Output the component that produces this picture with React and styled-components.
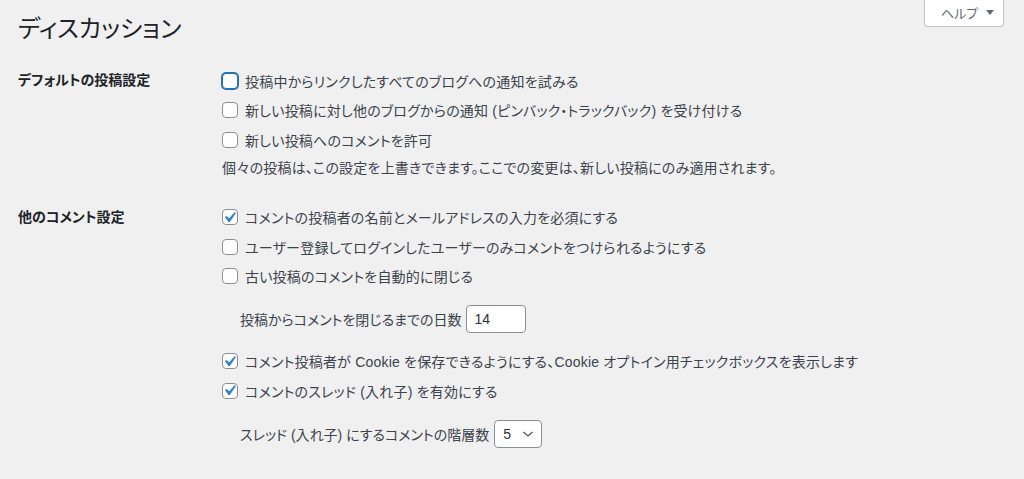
import React from 'react';
import styled, { createGlobalStyle } from 'styled-components';

const GlobalStyle = createGlobalStyle`
  body {
    margin: 0;
    background: #f0f0f1;
    color: #3c434a;
    font-family: "Liberation Sans", "Noto Sans CJK JP", sans-serif;
    font-size: 14px;
    font-feature-settings: "palt";
    letter-spacing: 0.2px;
  }
`;

const Page = styled.div`
  padding: 0 20px 0 18px;
`;

const Header = styled.div`
  display: flex;
  justify-content: space-between;
  align-items: flex-start;
  height: 66px;
`;

const Title = styled.h1`
  margin: 0;
  padding-top: 14px;
  font-size: 24px;
  font-weight: 400;
  line-height: 30px;
  letter-spacing: 0;
  color: #1d2327;
`;

const HelpButton = styled.button`
  display: flex;
  align-items: center;
  gap: 8px;
  width: 80px;
  height: 28px;
  margin-top: -1px;
  padding: 0 0 0 16px;
  background: #fff;
  border: 1px solid #c3c4c7;
  border-top: none;
  border-radius: 0 0 4px 4px;
  color: #646970;
  font-family: inherit;
  font-size: 13px;
  font-feature-settings: "palt";
`;

const Section = styled.div`
  display: grid;
  grid-template-columns: 204px 1fr;
  margin-top: ${p => p.$gap || 0}px;
`;

const Label = styled.div`
  font-weight: 700;
  line-height: 29.5px;
  letter-spacing: 0;
  color: #1d2327;
`;

const Fields = styled.div`
  display: flex;
  flex-direction: column;
`;

const CheckRow = styled.label`
  display: flex;
  align-items: center;
  gap: 7px;
  height: 29.5px;
`;

const Box = styled.span`
  display: flex;
  align-items: center;
  justify-content: center;
  flex: none;
  width: 16px;
  height: 16px;
  box-sizing: border-box;
  background: #fff;
  border: 1px solid ${p => (p.$focus ? '#2271b1' : '#8c8f94')};
  border-radius: 4px;
  box-shadow: ${p => (p.$focus ? '0 0 0 1px #2271b1' : 'none')};

  svg {
    flex: none;
    margin-left: -1px;
  }
`;

const Description = styled.p`
  margin: 0;
  line-height: 26px;
`;

const SubRow = styled.div`
  display: flex;
  align-items: center;
  gap: 5px;
  height: 28px;
  margin: 14px 0 13.5px 18px;
  letter-spacing: 0;
`;

const NumberInput = styled.div`
  display: flex;
  align-items: center;
  width: ${p => p.$width || 60}px;
  height: 28px;
  box-sizing: border-box;
  padding: 0 7px;
  background: #fff;
  border: 1px solid #8c8f94;
  border-radius: 4px;
  color: #2c3338;
`;

const SelectBox = styled(NumberInput)`
  justify-content: space-between;
  padding: 0 7px 0 8px;
`;

const Check = () => (
  <svg width="21" height="21" viewBox="0 0 20 20">
    <path d="M14.83 4.89l1.34.94-5.81 8.38H9.02L5.78 9.67l1.34-1.25 2.57 2.4z" fill="#3582c4" />
  </svg>
);

const Checkbox = ({ checked, focus, children }) => (
  <CheckRow>
    <Box $focus={focus}>{checked && <Check />}</Box>
    {children}
  </CheckRow>
);

const App = () => (
  <>
    <GlobalStyle />
    <Page>
      <Header>
        <Title>ディスカッション</Title>
        <HelpButton>
          ヘルプ
          <svg width="8" height="5" viewBox="0 0 8 5">
            <path d="M0 0h8L4 5z" fill="#646970" />
          </svg>
        </HelpButton>
      </Header>

      <Section>
        <Label>デフォルトの投稿設定</Label>
        <Fields>
          <Checkbox focus>投稿中からリンクしたすべてのブログへの通知を試みる</Checkbox>
          <Checkbox>新しい投稿に対し他のブログからの通知 (ピンバック・トラックバック) を受け付ける</Checkbox>
          <Checkbox>新しい投稿へのコメントを許可</Checkbox>
          <Description>個々の投稿は、この設定を上書きできます。ここでの変更は、新しい投稿にのみ適用されます。</Description>
        </Fields>
      </Section>

      <Section $gap={22}>
        <Label>他のコメント設定</Label>
        <Fields>
          <Checkbox checked>コメントの投稿者の名前とメールアドレスの入力を必須にする</Checkbox>
          <Checkbox>ユーザー登録してログインしたユーザーのみコメントをつけられるようにする</Checkbox>
          <Checkbox>古い投稿のコメントを自動的に閉じる</Checkbox>
          <SubRow>
            投稿からコメントを閉じるまでの日数
            <NumberInput $width={60}>14</NumberInput>
          </SubRow>
          <Checkbox checked>コメント投稿者が Cookie を保存できるようにする、Cookie オプトイン用チェックボックスを表示します</Checkbox>
          <Checkbox checked>コメントのスレッド (入れ子) を有効にする</Checkbox>
          <SubRow>
            スレッド (入れ子) にするコメントの階層数
            <SelectBox $width={48}>
              5
              <svg width="12" height="8" viewBox="0 0 12 8">
                <path d="M1.5 2l4.5 4 4.5-4" fill="none" stroke="#50575e" strokeWidth="1.3" />
              </svg>
            </SelectBox>
          </SubRow>
        </Fields>
      </Section>
    </Page>
  </>
);

export default App;
